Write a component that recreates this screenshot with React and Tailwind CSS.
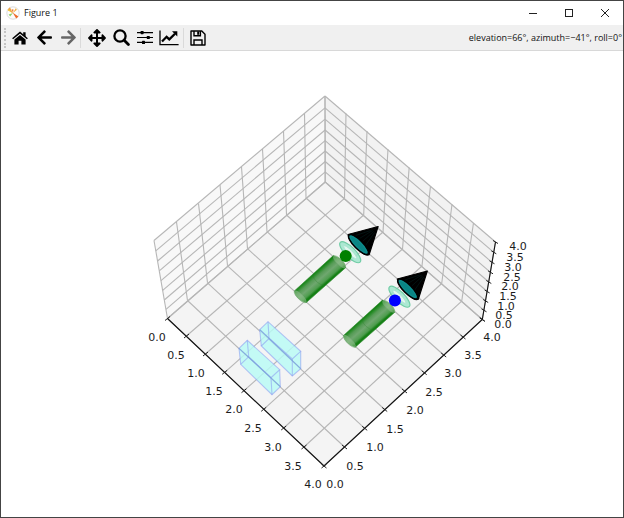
import React from "react";
import { FaArrowLeft, FaArrowRight, FaArrowsAlt } from "react-icons/fa";

/* Tick positions along each edge of the projected axes box. */
const frontX = [[167.5, 318.5], [186.5, 336], [205.5, 354], [224.7, 372.3], [244, 390.7], [263.7, 409.3], [283.7, 428], [304, 447], [324, 466]];
const frontY = [[324, 466], [344.5, 447], [364.7, 428.3], [384.7, 409.5], [404.5, 391], [424.2, 372.7], [443.7, 355], [463, 337], [482.3, 319.5]];
const backY = [[167.5, 318.5], [187.5, 300.5], [207.5, 282.8], [227.5, 265.8], [247.5, 248.7], [267, 231.7], [286.5, 215], [306, 198], [325.2, 182]];
const backX = [[325.2, 182], [344.5, 198.3], [363.7, 215], [383, 232], [402.5, 249], [422, 266], [441.7, 283.5], [461.7, 301.2], [482.3, 319.5]];
const topY = [[154, 240.5], [176.5, 222], [198.5, 203.5], [220, 185], [241.5, 167], [262.5, 149], [283.5, 131], [304.5, 113.3], [325, 96]];
const topX = [[325, 96], [346, 113.5], [367, 131], [388, 149.2], [409.2, 167.5], [430.5, 186], [452, 204.5], [473.5, 223], [495.5, 242]];
const zLeft = [[167.5, 318.5], [166, 309.3], [164.3, 300], [162.7, 290.3], [161, 280.6], [159.3, 270.8], [157.6, 261], [155.8, 250.8], [154, 240.5]];
const zBack = [[325.2, 182], [325.2, 171.8], [325.2, 161.5], [325.2, 151], [325.1, 140.7], [325.1, 130], [325, 119.2], [325, 107.8], [325, 96]];
const zRight = [[482.3, 319.5], [484, 310.3], [485.7, 301], [487.2, 291.5], [488.8, 282], [490.5, 272.3], [492, 262.3], [493.8, 252.3], [495.5, 242]];

const names = ["0.0", "0.5", "1.0", "1.5", "2.0", "2.5", "3.0", "3.5", "4.0"];
const labelsX = [[157, 337], [176, 355], [196, 373], [214, 391], [234, 409], [253, 428], [273, 447], [293, 466], [313, 484]];
const labelsY = [[335, 484], [355, 466], [375, 447], [395, 429], [415, 410], [434, 392], [453, 373], [473, 355], [492, 337]];
const labelsZ = [[503, 324], [504, 315], [506, 306], [508, 296], [510, 286], [512, 277], [513, 267], [515, 257], [518, 246]];

const pts = (list) => list.map((p) => p.join(",")).join(" ");

function Grid({ from, to }) {
  return from.map((a, i) => (
    <line key={i} x1={a[0]} y1={a[1]} x2={to[i][0]} y2={to[i][1]} stroke="#b6b6b6" strokeWidth="1.1" />
  ));
}

function Ticks({ at, dx, dy }) {
  return at.map(([x, y], i) => (
    <line key={i} x1={x - dx} y1={y - dy} x2={x + dx} y2={y + dy} stroke="#222" strokeWidth="1" />
  ));
}

function Labels({ at }) {
  return at.map(([x, y], i) => (
    <text key={i} x={x} y={y + 4} textAnchor="middle" fill="#1c1c1c" className="font-['DejaVu_Sans',sans-serif] text-[11px]">
      {names[i]}
    </text>
  ));
}

/* A box is given by its four top and four bottom corners. */
function Box({ top, bottom }) {
  const edge = { fill: "none", stroke: "#8d9ff2", strokeOpacity: 0.6, strokeWidth: 1.1 };
  const hull = [top[0], top[1], top[2], bottom[2], bottom[3], bottom[0]];
  return (
    <g>
      <polygon points={pts(hull)} fill="#b8fbf5" fillOpacity="0.82" />
      <polygon points={pts(top)} {...edge} />
      <polygon points={pts(bottom)} {...edge} />
      {top.map((p, i) => (
        <line key={i} x1={p[0]} y1={p[1]} x2={bottom[i][0]} y2={bottom[i][1]} {...edge} />
      ))}
      <line x1={top[0][0]} y1={top[0][1]} x2={bottom[2][0]} y2={bottom[2][1]} stroke="#6f9fd0" strokeOpacity="0.6" strokeWidth="1.1" />
    </g>
  );
}

/* Cylinder, lens ring, ball and cone, placed relative to the ball. */
function Probe({ x, y, color }) {
  return (
    <g transform={`translate(${x} ${y})`}>
      <path d="M-12.4 -.4 L-51.4 35 Q-50 43 -39.7 46.8 L-.1 11.7 Q-2 3 -12.4 -.4Z" fill="url(#tube)" stroke="#2d8a2d" strokeWidth=".6" />
      <ellipse cx="-45.5" cy="40.8" rx="8" ry="2.6" transform="rotate(45 -45.5 40.8)" fill="#a9cfa5" fillOpacity=".4" stroke="#7fae7f" strokeWidth=".6" />
      <ellipse cx="-6.2" cy="5.8" rx="8" ry="2.8" transform="rotate(45 -6.2 5.8)" fill="#a9cfa5" fillOpacity=".4" stroke="#76aa76" strokeWidth=".6" />
      <path d="M-33 19 Q-31 27 -21 30" fill="none" stroke="#2f7d2f" strokeOpacity=".4" strokeWidth=".8" />
      <g transform="translate(4.5 -3.8) rotate(45)">
        <ellipse rx="14" ry="5" fill="#9fe5cb" fillOpacity=".85" stroke="#70cda6" strokeWidth="1.2" />
        <ellipse rx="9" ry="2" fill="#e4f7f0" stroke="#a4e3ce" strokeWidth=".7" />
      </g>
      <circle r="6" fill={color} />
      <g transform="translate(12.8 -11.5)">
        <path d="M-10.4 -10 L19.6 -18 L10.6 10.2 Q7 12 0 5 Q-10 -4 -10.4 -10Z" fill="#000" stroke="#000" strokeWidth="1.2" strokeLinejoin="round" />
        <path d="M-3 -9 L12 -14 M1 -6 L14 -14 M4 -3 L15 -13 M7 1 L16 -12" stroke="#062424" strokeWidth=".5" />
        <ellipse rx="13.4" ry="4.3" transform="rotate(45)" fill="#0a8585" stroke="#000" strokeWidth="1.6" />
        <ellipse rx="11.5" ry="2.6" transform="rotate(45)" fill="none" stroke="#118f8f" strokeWidth=".8" />
      </g>
    </g>
  );
}

function Plot() {
  return (
    <svg viewBox="1 51 622 466" className="block h-auto w-full" role="img" aria-label="3D plot">
      <defs>
        <linearGradient id="tube" gradientUnits="userSpaceOnUse" x1="-12" y1="0" x2="-2" y2="11.5">
          <stop offset="0" stopColor="#0f7f0f" />
          <stop offset=".15" stopColor="#2f8f2f" />
          <stop offset=".3" stopColor="#559b55" />
          <stop offset=".55" stopColor="#6fa76f" />
          <stop offset=".85" stopColor="#4f9d4f" />
          <stop offset="1" stopColor="#158015" />
        </linearGradient>
      </defs>
      <polygon points="154,240.5 325,96 325.2,182 167.5,318.5" fill="#f8f8f8" />
      <polygon points="325,96 495.5,242 482.3,319.5 325.2,182" fill="#f2f2f2" />
      <polygon points="167.5,318.5 325.2,182 482.3,319.5 324,466" fill="#f4f4f4" />
      <Grid from={frontX} to={backX} />
      <Grid from={backY} to={frontY} />
      <Grid from={backY} to={topY} />
      <Grid from={backX} to={topX} />
      <Grid from={zLeft} to={zBack} />
      <Grid from={zBack} to={zRight} />
      <polyline points="167.5,318.5 324,466 482.3,319.5 495.5,242" fill="none" stroke="#111" strokeWidth="1.1" />
      <Ticks at={frontX} dx={2.5} dy={-2} />
      <Ticks at={frontY} dx={2.5} dy={2} />
      <Ticks at={zRight} dx={2.5} dy={1.5} />
      <Labels at={labelsX} />
      <Labels at={labelsY} />
      <Labels at={labelsZ} />
      <Box
        top={[[239, 348.3], [247.3, 340.3], [279.7, 369.7], [271, 377.7]]}
        bottom={[[240.7, 364.3], [248.7, 356.7], [280.3, 386.7], [272, 394.7]]}
      />
      <Box
        top={[[259.7, 329.7], [268, 321.7], [300.7, 351.3], [292.3, 359]]}
        bottom={[[261.3, 346], [269, 338.5], [300.7, 368.7], [292.3, 376]]}
      />
      <Probe x={345.7} y={256} color="#008000" />
      <Probe x={394.9} y={300.5} color="#0000ff" />
    </svg>
  );
}

function Logo() {
  return (
    <svg viewBox="0 0 14 14" className="size-[14px]" aria-hidden="true">
      <circle cx="7" cy="7" r="6.2" fill="#fdfdfd" stroke="#d3d3d3" strokeWidth=".8" />
      <path d="M7 7.5 L1.6 3.4 L4 1.2Z" fill="#eea048" />
      <path d="M7 7 L1.8 4.6 L2.4 2.8Z" fill="#f3c33c" />
      <path d="M6.6 6.6 L12.4 10.4 L10.2 12.4Z" fill="#ee6a28" />
      <path d="M7 7 L2.6 8.4 L4.2 10.4Z" fill="#8ed06a" />
      <path d="M7 7 L9.7 2.3 L10.9 3.8Z" fill="#f0b040" />
      <path d="M7 7 L5.6 3.2 L7.5 3.6Z" fill="#ef7a30" />
    </svg>
  );
}

function HomeIcon() {
  return (
    <svg viewBox="0 0 16 14" className="h-[14px] w-4" fill="currentColor">
      <path d="M8 3.9 L13.6 8.6 V13.6 H9.4 V9.8 H6.6 V13.6 H2.4 V8.6Z" />
      <path d="M.6 7.8 L8 1.6 L15.4 7.8" fill="none" stroke="currentColor" strokeWidth="1.5" />
      <path d="M11.2 1.2 H13.6 V6 L11.2 4Z" />
    </svg>
  );
}

function SearchIcon() {
  return (
    <svg viewBox="0 0 17 17" className="size-[17px]" fill="none" stroke="currentColor">
      <circle cx="7" cy="7" r="5.6" strokeWidth="2.3" />
      <path d="M11.2 11.2 L15.4 15.4" strokeWidth="2.8" strokeLinecap="round" />
    </svg>
  );
}

function SlidersIcon() {
  return (
    <svg viewBox="0 0 16 15" className="h-[15px] w-4" fill="currentColor">
      <path d="M0 2 H16 V3.2 H0Z M0 6.9 H16 V8.1 H0Z M0 11.8 H16 V13 H0Z" />
      <rect x="3.6" y="1" width="3" height="3.2" rx=".6" />
      <rect x="9.8" y="5.9" width="3" height="3.2" rx=".6" />
      <rect x="5" y="10.8" width="3" height="3.2" rx=".6" />
    </svg>
  );
}

function ChartIcon() {
  return (
    <svg viewBox="0 0 20 16" className="h-4 w-5" fill="none" stroke="currentColor">
      <path d="M1 .5 V14.6 H19.6" strokeWidth="1.3" />
      <path d="M3 11.5 L7.6 6.8 L10.3 9.4 L16 3.7" strokeWidth="2.3" />
      <path d="M13 1.2 H18.3 V6.5Z" fill="currentColor" stroke="none" />
    </svg>
  );
}

function SaveIcon() {
  return (
    <svg viewBox="0 0 16 16" className="size-4" fill="none" stroke="currentColor" strokeWidth="1.4">
      <path d="M1 1 H11.8 L15 4.2 V15 H1Z" strokeLinejoin="round" />
      <path d="M4 15 V10 H12 V15" />
      <path d="M4 1 V5.8 H10.4 V1" />
      <path d="M8.2 1.4 V4.8" strokeWidth="2" />
    </svg>
  );
}

function Tool({ label, children, disabled }) {
  return (
    <button type="button" aria-label={label} disabled={disabled} className="flex h-6 w-6 items-center justify-center text-black disabled:text-[#666]">
      {children}
    </button>
  );
}

function Separator() {
  return <div className="h-5 w-px bg-[#dadada]" />;
}

export default function App() {
  return (
    <main className="flex min-h-screen flex-col border border-[#444] bg-white font-['Open_Sans','Noto_Sans',sans-serif]">
      <header className="flex h-6 items-center justify-between pl-[5px]">
        <div className="flex items-center gap-1">
          <Logo />
          <h1 className="text-[9px] leading-4 text-[#111]">Figure 1</h1>
        </div>
        <div className="flex text-[#222]">
          <button type="button" aria-label="Minimize" className="flex h-6 w-9 items-center justify-center">
            <svg viewBox="0 0 10 10" className="size-[10px]" stroke="currentColor"><path d="M1 5.5 H9" /></svg>
          </button>
          <button type="button" aria-label="Maximize" className="flex h-6 w-9 items-center justify-center">
            <svg viewBox="0 0 10 10" className="size-[10px]" fill="none" stroke="currentColor"><rect x="1.5" y="1.5" width="7" height="7" /></svg>
          </button>
          <button type="button" aria-label="Close" className="flex h-6 w-9 items-center justify-center">
            <svg viewBox="0 0 10 10" className="size-[10px]" stroke="currentColor"><path d="M1 1 L9 9 M9 1 L1 9" /></svg>
          </button>
        </div>
      </header>
      <div className="flex h-[26px] items-center justify-between border-b border-[#d8d8d8] bg-[#f0f0f0] pr-px pl-[3px]" role="toolbar">
        <div className="flex items-center">
          <div className="mr-[2px] h-5 w-0 border-l-2 border-dotted border-[#c4c4c4]" />
          <Tool label="Home"><HomeIcon /></Tool>
          <Tool label="Back"><FaArrowLeft size={17} /></Tool>
          <Tool label="Forward" disabled><FaArrowRight size={17} /></Tool>
          <Separator />
          <div className="w-1" />
          <Tool label="Pan"><FaArrowsAlt size={18} /></Tool>
          <Tool label="Zoom"><SearchIcon /></Tool>
          <Tool label="Configure subplots"><SlidersIcon /></Tool>
          <Tool label="Edit axes"><ChartIcon /></Tool>
          <div className="w-[2px]" />
          <Separator />
          <div className="w-[2px]" />
          <Tool label="Save"><SaveIcon /></Tool>
        </div>
        <p className="text-[9px] leading-4 whitespace-nowrap text-[#111]">elevation=66°, azimuth=−41°, roll=0°</p>
      </div>
      <Plot />
    </main>
  );
}
